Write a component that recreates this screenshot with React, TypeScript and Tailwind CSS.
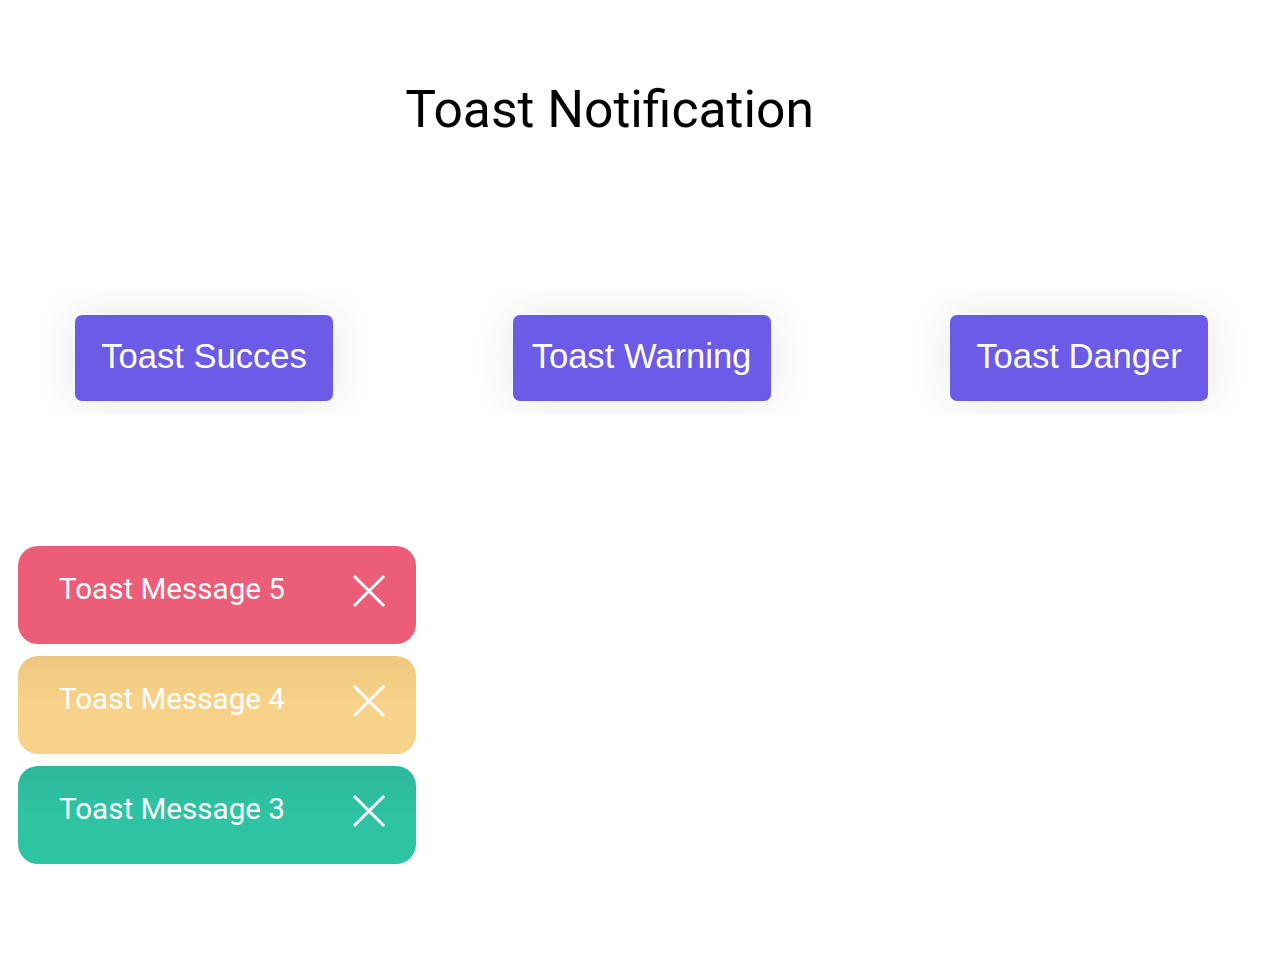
import React, { useState } from 'react';

type ToastKind = 'success' | 'warning' | 'danger';

type Toast = {
  id: number;
  kind: ToastKind;
};

const toastStyles: Record<ToastKind, string> = {
  danger: 'bg-[#ec5d77]',
  warning: 'bg-gradient-to-b from-[#efc781] via-[#f8d288] to-[#f8d288]',
  success: 'bg-gradient-to-b from-[#2db89b] via-[#2ec3a3] to-[#2ec3a3]',
};

const CloseIcon = () => (
  <svg width="34" height="34" viewBox="0 0 34 34" fill="none" stroke="white" strokeWidth="3" strokeLinecap="square">
    <line x1="3" y1="3" x2="31" y2="31" />
    <line x1="31" y1="3" x2="3" y2="31" />
  </svg>
);

const TriggerButton: React.FC<{ label: string; onClick: () => void }> = ({ label, onClick }) => (
  <div className="overflow-hidden px-[42px] pt-[25px] pb-[13px] -mx-[42px]">
    <button
      onClick={onClick}
      className="w-[258px] h-[86px] rounded-[7px] bg-[#6b5be6] text-white text-[34.6px] leading-none pb-[4px] font-['Liberation_Sans',Arial,sans-serif] shadow-[0_0_45px_rgba(0,0,0,0.1)] flex items-center justify-center"
    >
      {label}
    </button>
  </div>
);

const App: React.FC = () => {
  const [toasts, setToasts] = useState<Toast[]>([
    { id: 5, kind: 'danger' },
    { id: 4, kind: 'warning' },
    { id: 3, kind: 'success' },
  ]);
  const [nextId, setNextId] = useState(6);

  const addToast = (kind: ToastKind) => {
    setToasts([{ id: nextId, kind }, ...toasts]);
    setNextId(nextId + 1);
  };

  const removeToast = (id: number) => {
    setToasts(toasts.filter((t) => t.id !== id));
  };

  return (
    <div className="min-h-[960px] bg-white font-['Roboto',sans-serif]">
      <div className="pt-[80px] flex justify-center pr-[61px]">
        <h1 className="text-[51.6px] leading-[60px] font-normal text-black">Toast Notification</h1>
      </div>

      <div className="mt-[150px] flex justify-between pl-[75px] pr-[72px]">
        <TriggerButton label="Toast Succes" onClick={() => addToast('success')} />
        <TriggerButton label="Toast Warning" onClick={() => addToast('warning')} />
        <TriggerButton label="Toast Danger" onClick={() => addToast('danger')} />
      </div>

      <div className="mt-[132px] ml-[18px] flex flex-col gap-[12px] w-[398px]">
        {toasts.map((t) => (
          <div
            key={t.id}
            className={`h-[98px] rounded-[20px] flex items-center justify-between pl-[41px] pr-[30px] pb-[12px] ${toastStyles[t.kind]}`}
          >
            <span className="text-white text-[29.6px]">Toast Message {t.id}</span>
            <button onClick={() => removeToast(t.id)} className="mt-[4px]">
              <CloseIcon />
            </button>
          </div>
        ))}
      </div>
    </div>
  );
};

export default App;
